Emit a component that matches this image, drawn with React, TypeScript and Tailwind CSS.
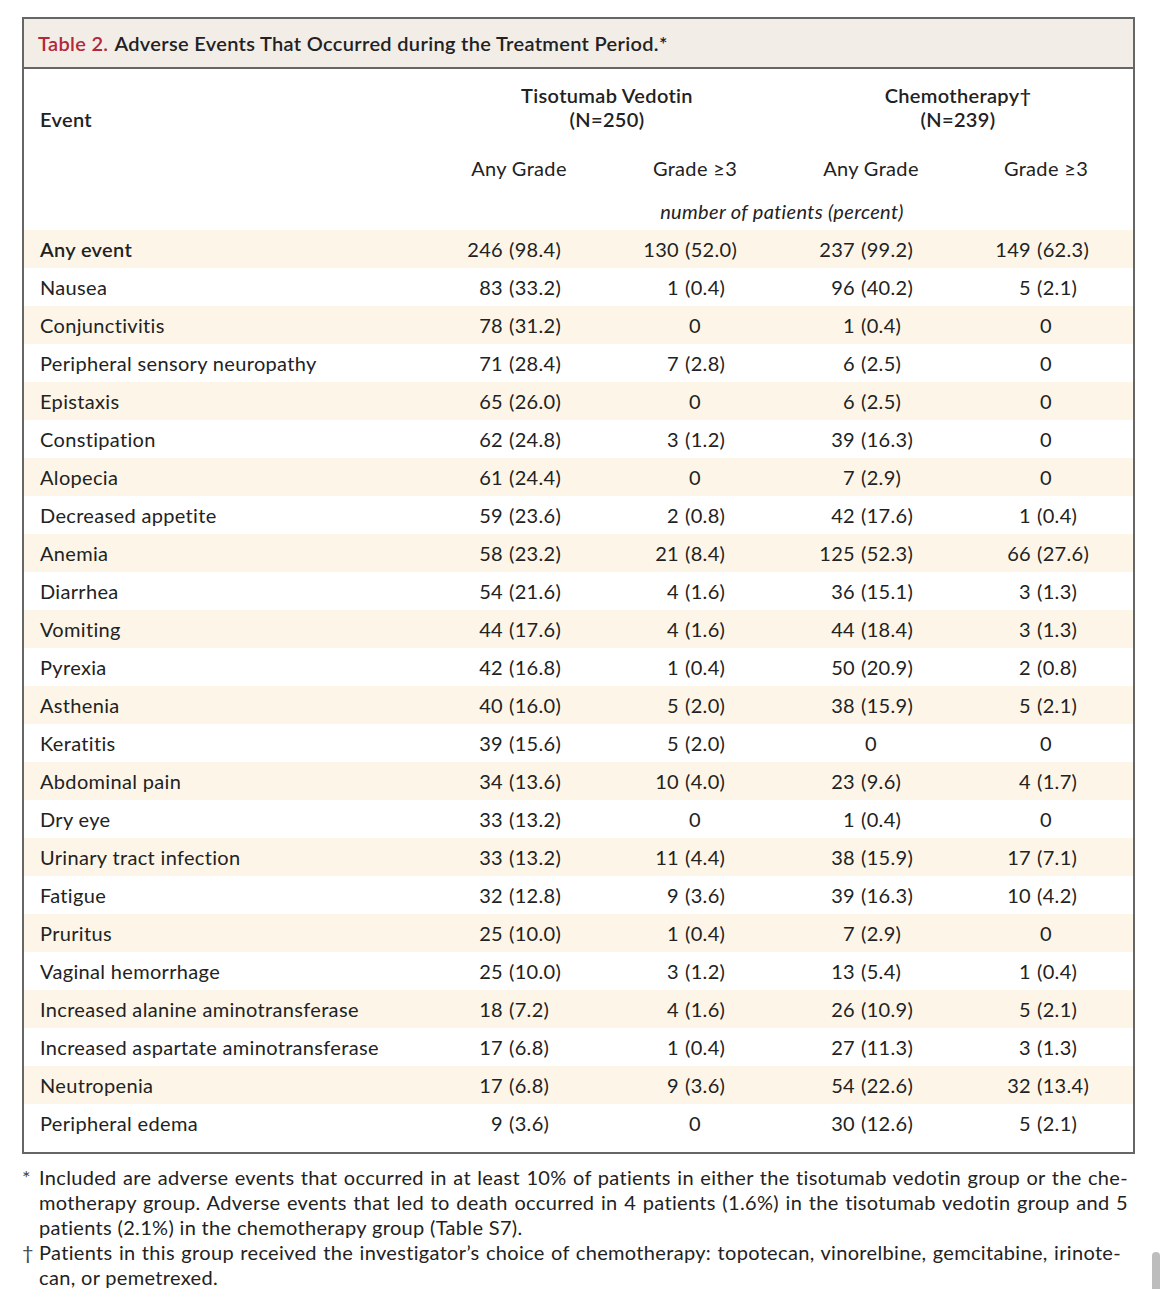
import React from 'react';

type Cell = [string, string] | '0';

interface EventRow {
  name: string;
  cells: Cell[];
  bold?: boolean;
}

// Table data: count, percent for each column
const rows: EventRow[] = [
  { name: 'Any event', bold: true, cells: [['246', '(98.4)'], ['130', '(52.0)'], ['237', '(99.2)'], ['149', '(62.3)']] },
  { name: 'Nausea', cells: [['83', '(33.2)'], ['1', '(0.4)'], ['96', '(40.2)'], ['5', '(2.1)']] },
  { name: 'Conjunctivitis', cells: [['78', '(31.2)'], '0', ['1', '(0.4)'], '0'] },
  { name: 'Peripheral sensory neuropathy', cells: [['71', '(28.4)'], ['7', '(2.8)'], ['6', '(2.5)'], '0'] },
  { name: 'Epistaxis', cells: [['65', '(26.0)'], '0', ['6', '(2.5)'], '0'] },
  { name: 'Constipation', cells: [['62', '(24.8)'], ['3', '(1.2)'], ['39', '(16.3)'], '0'] },
  { name: 'Alopecia', cells: [['61', '(24.4)'], '0', ['7', '(2.9)'], '0'] },
  { name: 'Decreased appetite', cells: [['59', '(23.6)'], ['2', '(0.8)'], ['42', '(17.6)'], ['1', '(0.4)']] },
  { name: 'Anemia', cells: [['58', '(23.2)'], ['21', '(8.4)'], ['125', '(52.3)'], ['66', '(27.6)']] },
  { name: 'Diarrhea', cells: [['54', '(21.6)'], ['4', '(1.6)'], ['36', '(15.1)'], ['3', '(1.3)']] },
  { name: 'Vomiting', cells: [['44', '(17.6)'], ['4', '(1.6)'], ['44', '(18.4)'], ['3', '(1.3)']] },
  { name: 'Pyrexia', cells: [['42', '(16.8)'], ['1', '(0.4)'], ['50', '(20.9)'], ['2', '(0.8)']] },
  { name: 'Asthenia', cells: [['40', '(16.0)'], ['5', '(2.0)'], ['38', '(15.9)'], ['5', '(2.1)']] },
  { name: 'Keratitis', cells: [['39', '(15.6)'], ['5', '(2.0)'], '0', '0'] },
  { name: 'Abdominal pain', cells: [['34', '(13.6)'], ['10', '(4.0)'], ['23', '(9.6)'], ['4', '(1.7)']] },
  { name: 'Dry eye', cells: [['33', '(13.2)'], '0', ['1', '(0.4)'], '0'] },
  { name: 'Urinary tract infection', cells: [['33', '(13.2)'], ['11', '(4.4)'], ['38', '(15.9)'], ['17', '(7.1)']] },
  { name: 'Fatigue', cells: [['32', '(12.8)'], ['9', '(3.6)'], ['39', '(16.3)'], ['10', '(4.2)']] },
  { name: 'Pruritus', cells: [['25', '(10.0)'], ['1', '(0.4)'], ['7', '(2.9)'], '0'] },
  { name: 'Vaginal hemorrhage', cells: [['25', '(10.0)'], ['3', '(1.2)'], ['13', '(5.4)'], ['1', '(0.4)']] },
  { name: 'Increased alanine aminotransferase', cells: [['18', '(7.2)'], ['4', '(1.6)'], ['26', '(10.9)'], ['5', '(2.1)']] },
  { name: 'Increased aspartate aminotransferase', cells: [['17', '(6.8)'], ['1', '(0.4)'], ['27', '(11.3)'], ['3', '(1.3)']] },
  { name: 'Neutropenia', cells: [['17', '(6.8)'], ['9', '(3.6)'], ['54', '(22.6)'], ['32', '(13.4)']] },
  { name: 'Peripheral edema', cells: [['9', '(3.6)'], '0', ['30', '(12.6)'], ['5', '(2.1)']] },
];

const NumberCell: React.FC<{ cell: Cell }> = ({ cell }) => {
  if (cell === '0') {
    return <div className="text-center">0</div>;
  }
  return (
    <div className="grid grid-cols-[78px_1fr]">
      <span className="text-right pr-[6px]">{cell[0]}</span>
      <span className="text-left">{cell[1]}</span>
    </div>
  );
};

const App: React.FC = () => {
  return (
    <div className="relative w-[1170px] h-[1289px] bg-white text-[#222] font-['Lato','Open_Sans',sans-serif] text-[20px] leading-[24px] tracking-[0.33px] overflow-hidden">
      <div className="ml-[22px] mt-[17px] w-[1113px] border-2 border-[#666]">
        {/* Title bar */}
        <div className="h-[50px] bg-[#f3ede7] border-b-2 border-[#666] pl-[14px] flex items-center font-semibold">
          <span className="text-[#b3283a]">Table 2.</span>
          <span className="ml-[6px]">Adverse Events That Occurred during the Treatment Period.*</span>
        </div>

        {/* Header */}
        <div className="grid grid-cols-[407px_176px_176px_176px_1fr] pt-[14px] pb-[7px]">
          <div className="pl-[16px] h-[48px] flex items-end font-semibold">Event</div>
          <div className="col-span-2 text-center font-semibold">
            <div>Tisotumab Vedotin</div>
            <div>(N=250)</div>
          </div>
          <div className="col-span-2 text-center font-semibold">
            <div>Chemotherapy†</div>
            <div>(N=239)</div>
          </div>

          <div className="mt-[25px]" />
          <div className="mt-[25px] text-center">Any Grade</div>
          <div className="mt-[25px] text-center">Grade ≥3</div>
          <div className="mt-[25px] text-center">Any Grade</div>
          <div className="mt-[25px] text-center">Grade ≥3</div>

          <div className="mt-[19px]" />
          <div className="mt-[19px] col-span-4 text-center italic">number of patients (percent)</div>
        </div>

        {/* Body */}
        <div className="pb-[10px]">
          {rows.map((row, i) => (
            <div
              key={row.name}
              className={`grid grid-cols-[407px_176px_176px_176px_1fr] h-[38px] items-center ${i % 2 === 0 ? 'bg-[#fdf6e8]' : 'bg-white'}`}
            >
              <div className={`pl-[16px] ${row.bold ? 'font-semibold' : ''}`}>{row.name}</div>
              {row.cells.map((cell, j) => (
                <NumberCell key={j} cell={cell} />
              ))}
            </div>
          ))}
        </div>
      </div>

      {/* Footnotes */}
      <div className="ml-[22px] mt-[11px] w-[1106px] leading-[25px]">
        <div className="grid grid-cols-[17px_1fr]">
          <span className="text-[#444]">*</span>
          <div>
            <div className="text-justify [text-align-last:justify]">
              Included are adverse events that occurred in at least 10% of patients in either the tisotumab vedotin group or the che-
            </div>
            <div className="text-justify [text-align-last:justify]">
              motherapy group. Adverse events that led to death occurred in 4 patients (1.6%) in the tisotumab vedotin group and 5
            </div>
            <div>patients (2.1%) in the chemotherapy group (Table S7).</div>
          </div>
        </div>
        <div className="grid grid-cols-[17px_1fr]">
          <span className="text-[#444]">†</span>
          <div>
            <div className="text-justify [text-align-last:justify] pr-[7px]">
              Patients in this group received the investigator’s choice of chemotherapy: topotecan, vinorelbine, gemcitabine, irinote-
            </div>
            <div>can, or pemetrexed.</div>
          </div>
        </div>
      </div>

      {/* scroll indicator */}
      <div className="absolute left-[1152px] top-[1252px] w-[8px] h-[40px] rounded-t-full bg-[#bdbdbd]" />
    </div>
  );
};

export default App;
